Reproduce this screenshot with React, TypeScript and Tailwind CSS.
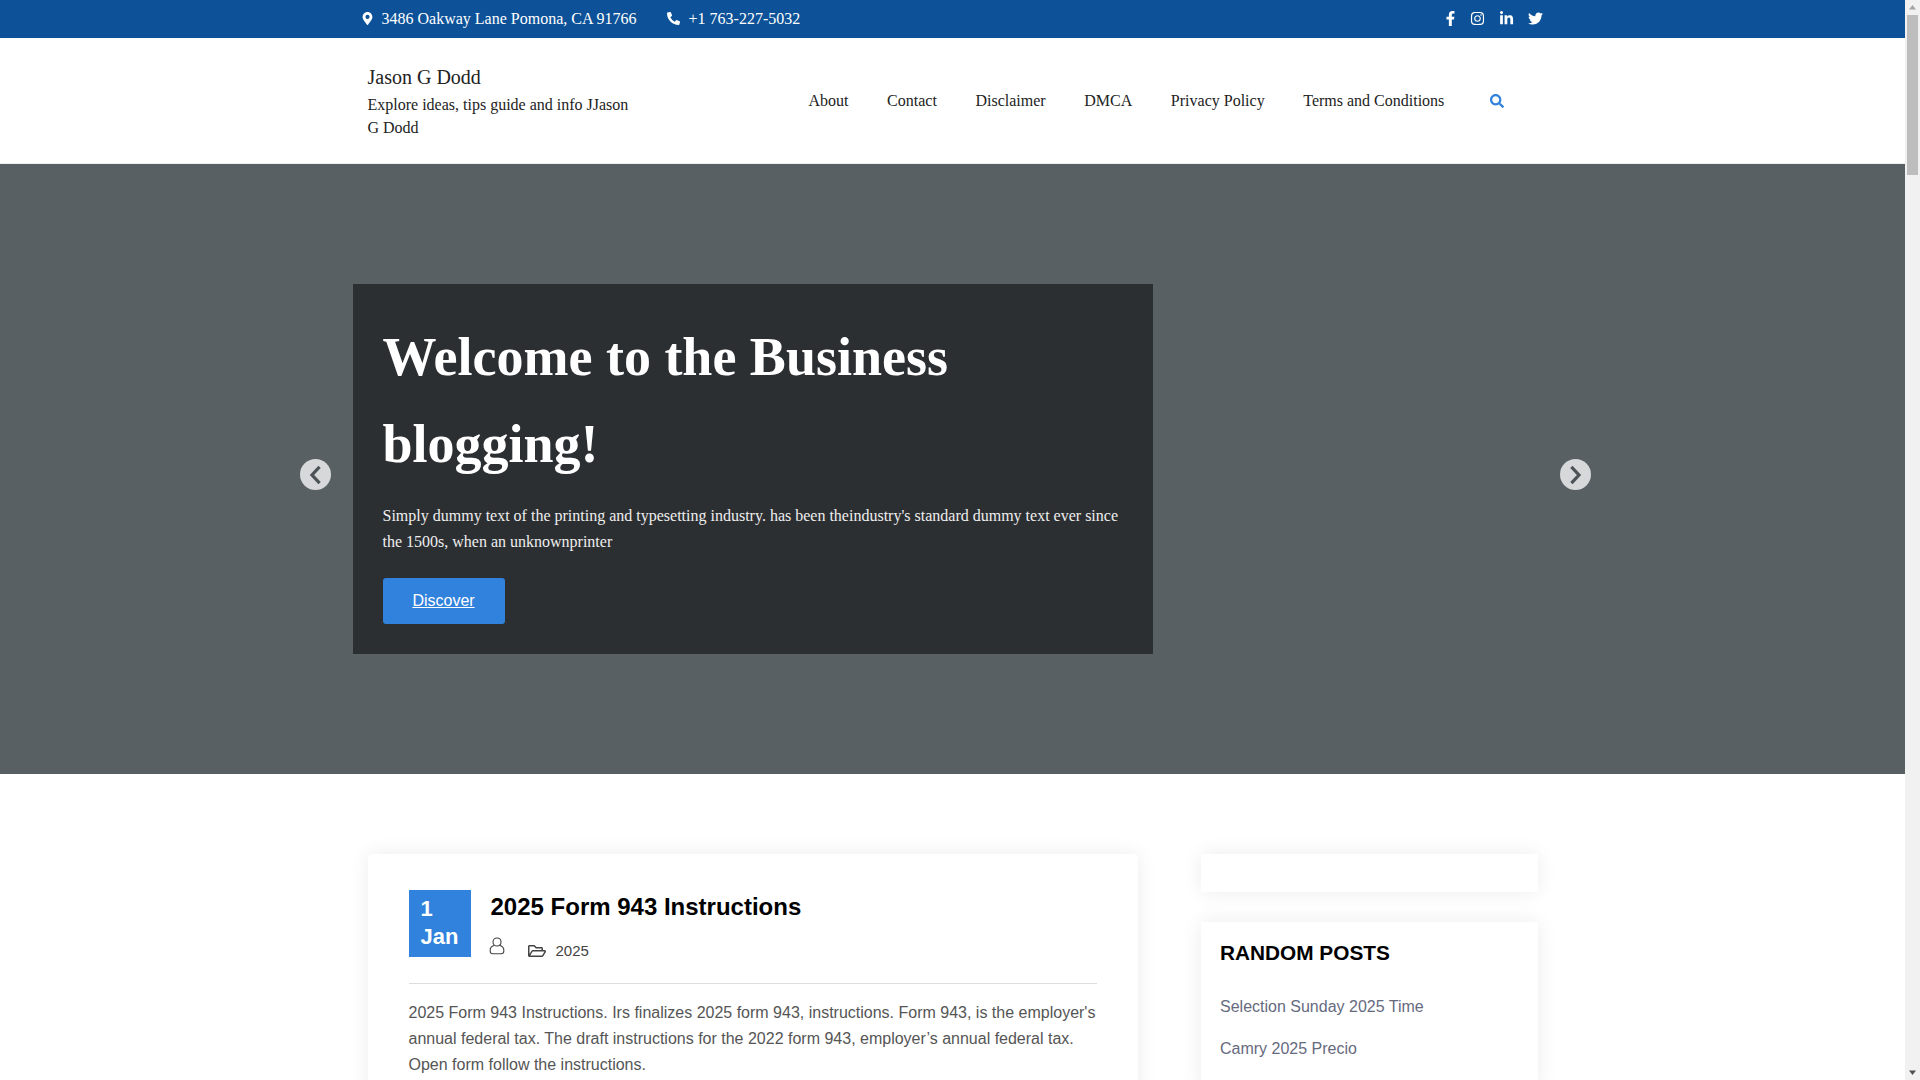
import { FaMapMarkerAlt, FaPhoneAlt, FaFacebookF, FaInstagram, FaLinkedinIn, FaTwitter, FaSearch, FaRegFolderOpen } from "react-icons/fa";

const serif = "font-['Liberation_Serif',serif]";
const sans = "font-['Liberation_Sans',sans-serif]";

const nav = ["About", "Contact", "Disclaimer", "DMCA", "Privacy Policy", "Terms and Conditions"];

function UserIcon() {
  return (
    <svg width="16" height="18" viewBox="0 0 16 18" fill="none" stroke="#444" strokeWidth="1.1" className="-ml-[2px] -translate-y-[3px]">
      <path d="M8 1c2.400 0 4 1.700 4 4s-1.600 4-4 4-4-1.700-4-4 1.600-4 4-4z" />
      <path d="M5 8.500C2.500 9.300 1.200 11 1.200 13v1.300c0 1.600 1 2.500 2.500 2.500h8.600c1.500 0 2.500-.9 2.500-2.500V13c0-2-1.300-3.700-3.800-4.500" />
    </svg>
  );
}

function Chevron({ dir }: { dir: "left" | "right" }) {
  return (
    <svg width="14" height="20" viewBox="0 0 14 20" fill="none" stroke="#4c5356" strokeWidth="3.200" strokeLinecap="square" strokeLinejoin="miter">
      <path d={dir === "left" ? "M9.500 3L3 10l6.500 7" : "M3.500 3L10 10l-6.500 7"} />
    </svg>
  );
}

export default function App() {
  return (
    <div className="flex h-screen overflow-hidden bg-white">
      <div className="flex-1 min-w-0 overflow-hidden">
        <div className={`h-[38px] bg-[#0d5298] text-white flex items-center pl-[361px] pr-[362px] text-[16px] ${serif}`}>
          <FaMapMarkerAlt className="text-[13px] mr-[7.500px] -mt-[1px]" />
          <span>3486 Oakway Lane Pomona, CA 91766</span>
          <FaPhoneAlt className="text-[13px] ml-[30px] mr-[9px] -mt-[2px]" />
          <span>+1 763-227-5032</span>
          <div className="ml-auto flex items-center gap-[14px] text-[15px] -mt-[1px]">
            <FaFacebookF className="-mr-[2px]" />
            <FaInstagram />
            <FaLinkedinIn />
            <FaTwitter />
          </div>
        </div>

        <header className={`h-[126px] flex items-center pl-[367.500px] text-[#222] ${serif} border-b border-[#eee]`}>
          <div className="w-[441px] shrink-0 pt-[1px]">
            <div className="text-[20px] leading-[28px]">Jason G Dodd</div>
            <div className="text-[16px] leading-[23px] w-[270px] mt-[2px]">Explore ideas, tips guide and info JJason G Dodd</div>
          </div>
          <nav className="flex items-center gap-[38.600px] text-[16px]">
            {nav.map((n) => (
              <span key={n}>{n}</span>
            ))}
          </nav>
          <FaSearch className="text-[14px] text-[#3182dc] ml-[46px]" />
        </header>

        <section className="h-[610px] bg-[#586063] flex items-center pl-[353px] relative">
          <div className="w-[800px] h-[370px] bg-[#2c2f32] pl-[29.500px] pr-[30px] pt-[30px]">
            <h1 className={`text-[54px] leading-[87px] font-bold text-white ${serif}`}>Welcome to the Business blogging!</h1>
            <p className={`text-[16px] leading-[26px] text-[#eee] mt-[15px] ${serif}`}>
              Simply dummy text of the printing and typesetting industry. has been theindustry's standard dummy text ever since the 1500s, when an unknownprinter
            </p>
            <a className={`mt-[23px] w-[122px] h-[46px] bg-[#3182dc] rounded-[3px] text-white underline flex items-center justify-center text-[16px] ${sans}`}>Discover</a>
          </div>
          <button className="absolute left-[300px] top-[295px] w-[31px] h-[31px] rounded-full bg-[#d6d8d9] flex items-center justify-center"><Chevron dir="left" /></button>
          <button className="absolute left-[1560px] top-[295px] w-[31px] h-[31px] rounded-full bg-[#d6d8d9] flex items-center justify-center"><Chevron dir="right" /></button>
        </section>

        <main className={`flex items-start pl-[368px] pt-[80px] ${sans}`}>
          <article className="w-[770px] rounded-[5px] bg-white shadow-[0_0_20px_rgba(0,0,0,0.08)] pl-[40.500px] pr-[41px] pt-[36px] pb-[40px]">
            <div className="flex border-b border-[#ddd] pb-[20px]">
              <div className="w-[62px] h-[67px] bg-[#3182dc] text-white font-semibold text-[22px] leading-[28px] pl-[12px] pt-[5px]">
                1<br />Jan
              </div>
              <div className="ml-[20px]">
                <h2 className="text-[24px] leading-[34px] font-bold text-black">2025 Form 943 Instructions</h2>
                <div className="flex items-center mt-[12px] text-[#444] text-[15px]">
                  <UserIcon />
                  <FaRegFolderOpen className="ml-[23px] mt-[3px] text-[18px]" />
                  <span className="ml-[10px] mt-[4px]">2025</span>
                </div>
              </div>
            </div>
            <p className="mt-[16px] text-[16px] leading-[26px] text-[#555]">
              2025 Form 943 Instructions. Irs finalizes 2025 form 943, instructions. Form 943, is the employer's annual federal tax. The draft instructions for the 2022 form 943, employer’s annual federal tax. Open form follow the instructions.
            </p>
          </article>
          <aside className="w-[337px] ml-[63px]">
            <div className="h-[38px] bg-white shadow-[0_0_20px_rgba(0,0,0,0.08)]" />
            <div className="mt-[30px] bg-white shadow-[0_0_20px_rgba(0,0,0,0.08)] px-[19px] pt-[18px] pb-[30px]">
              <h3 className="text-[20.800px] leading-[26px] font-bold text-black">RANDOM POSTS</h3>
              <div className="mt-[30px] text-[16px] leading-[22px] text-[#666a7e] flex flex-col gap-[20px]">
                <span>Selection Sunday 2025 Time</span>
                <span>Camry 2025 Precio</span>
              </div>
            </div>
          </aside>
        </main>
      </div>
      <div className="w-[15px] shrink-0 bg-[#f1f1f1] flex flex-col items-center justify-between relative">
        <svg width="15" height="15" viewBox="0 0 15 15"><path d="M4 9.500h7L7.500 5z" fill="#a3a3a3" /></svg>
        <div className="absolute top-[15px] left-[2px] w-[11px] h-[160px] bg-[#bdbdbd]" />
        <svg width="15" height="15" viewBox="0 0 15 15"><path d="M4 5.500h7L7.500 10z" fill="#505050" /></svg>
      </div>
    </div>
  );
}
